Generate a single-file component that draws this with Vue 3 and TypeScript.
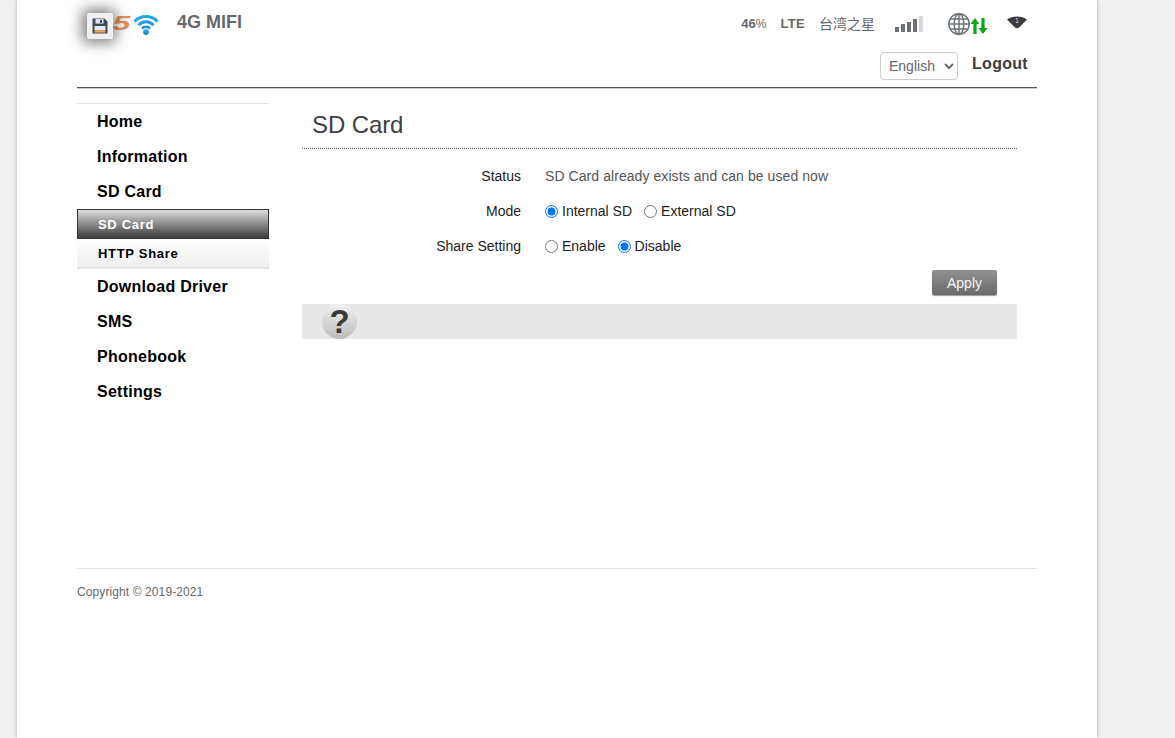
<template>
  <div class="page">
    <div class="container">
      <header class="header">
        <div class="top-row">
          <div class="logo">
            <span class="logo-g">5</span>
            <svg class="logo-wifi" width="26" height="24" viewBox="0 0 26 24">
              <defs>
                <linearGradient id="wifiBlue" x1="0" y1="0" x2="0" y2="1">
                  <stop offset="0" stop-color="#36b4f0" />
                  <stop offset="1" stop-color="#0c7fd0" />
                </linearGradient>
              </defs>
              <path d="M1.5 8.5 C7.5 1.8 18.5 1.8 24.5 8.5" fill="none" stroke="#22a5e8" stroke-width="3" />
              <path d="M5.5 12.2 C9.5 7.6 16.5 7.6 20.5 12.2" fill="none" stroke="#1c9ae2" stroke-width="2.8" />
              <path d="M9 15.6 C11.2 13.2 14.8 13.2 17 15.6" fill="none" stroke="#1a8fdc" stroke-width="2.4" />
              <circle cx="13" cy="19" r="2.9" fill="url(#wifiBlue)" />
            </svg>
            <div class="save-tip">
              <svg width="16" height="16" viewBox="0 0 16 16">
                <path d="M.5 .5 H12.5 L15.5 3.5 V15.5 H.5 Z" fill="#3f4a57" />
                <rect x="3.5" y="1" width="8" height="4.6" fill="#dfe5ec" />
                <rect x="8" y="1.8" width="2" height="3" fill="#3f4a57" />
                <rect x="2.5" y="8" width="11" height="4.4" fill="#e4edf6" />
                <rect x="2.5" y="12.4" width="11" height="2.2" fill="#f2a24e" />
              </svg>
            </div>
          </div>
          <span class="product">4G MIFI</span>
          <div class="status">
            <span class="battery">46<small>%</small></span>
            <span class="network">LTE</span>
            <span class="carrier">台湾之星</span>
            <span class="signal">
              <i v-for="(h, n) in bars" :key="n" :class="{ off: n === 4 }" :style="{ height: h + 'px' }"></i>
            </span>
            <span class="connect">
              <svg width="24" height="24" viewBox="0 0 24 24">
                <g fill="none" stroke="#6d7278" stroke-width="1.5">
                  <circle cx="12" cy="12" r="10.2" />
                  <ellipse cx="12" cy="12" rx="4.8" ry="10.2" />
                  <path d="M12 2 V22 M2 12 H22 M3.4 7 H20.6 M3.4 17 H20.6" />
                </g>
              </svg>
              <svg class="arrows" width="18" height="16" viewBox="0 0 18 16">
                <path d="M5 0 L9.5 6 H6.6 V16 H3.4 V6 H.5 Z" fill="#0aa51e" />
                <path d="M13 16 L8.5 10 H11.4 V0 H14.6 V10 H17.5 Z" fill="#0aa51e" />
              </svg>
            </span>
            <svg class="wifi-small" width="22" height="14" viewBox="0 0 22 14">
              <path d="M1 4.5 C6 .6 16 .6 21 4.5 L13 12.5 Q11 14 9 12.5 Z" fill="#3c3c3c" />
              <text x="11" y="8" text-anchor="middle" class="wifi-num">1</text>
            </svg>
          </div>
        </div>
        <div class="lang-row">
          <select class="lang">
            <option>English</option>
          </select>
          <a class="logout">Logout</a>
        </div>
      </header>

      <div class="content">
        <nav class="sidebar">
          <template v-for="item in menu" :key="item">
            <a class="nav-item">{{ item }}</a>
            <div v-if="item === 'SD Card'" class="sub-menu">
              <a class="sub-item active">SD Card</a>
              <a class="sub-item">HTTP Share</a>
            </div>
          </template>
        </nav>

        <main class="main">
          <h1 class="title">SD Card</h1>
          <form class="form" @submit.prevent>
            <div class="row">
              <label class="row-label">Status</label>
              <span class="value">SD Card already exists and can be used now</span>
            </div>
            <div class="row">
              <label class="row-label">Mode</label>
              <label class="radio"><input v-model="mode" type="radio" value="internal" />Internal SD</label>
              <label class="radio"><input v-model="mode" type="radio" value="external" />External SD</label>
            </div>
            <div class="row">
              <label class="row-label">Share Setting</label>
              <label class="radio"><input v-model="share" type="radio" value="enable" />Enable</label>
              <label class="radio"><input v-model="share" type="radio" value="disable" />Disable</label>
            </div>
            <div class="actions">
              <button class="apply">Apply</button>
            </div>
          </form>
          <div class="help-bar">
            <div class="help-icon">?</div>
          </div>
        </main>
      </div>

      <footer class="footer">Copyright © 2019-2021</footer>
    </div>
  </div>
</template>

<script setup lang="ts">
import { ref } from 'vue'

const menu = ['Home', 'Information', 'SD Card', 'Download Driver', 'SMS', 'Phonebook', 'Settings']
const bars = [5, 8, 10, 13, 16]
const mode = ref('internal')
const share = ref('disable')
</script>

<style>
html,
body {
  margin: 0;
  background: #f1f1f1;
}
</style>

<style scoped>
.page {
  font-family: "Liberation Sans", Arial, "Noto Sans CJK SC", sans-serif;
  height: 738px;
  overflow: hidden;
}

.container {
  box-sizing: border-box;
  width: 1080px;
  height: 738px;
  margin-left: 17px;
  padding: 0 60px;
  background: #fff;
  box-shadow: 0 0 4px #aaa;
}

.header {
  height: 87px;
  border-bottom: 1px solid #555;
  box-shadow: 0 1px 0 #ccc;
}

.top-row {
  display: flex;
  align-items: center;
  height: 47px;
}

.logo {
  position: relative;
  display: flex;
  align-items: center;
  width: 100px;
  height: 47px;
}

.logo-g {
  display: inline-block;
  width: 19px;
  margin-left: 35px;
  margin-right: 2px;
  font-size: 20px;
  font-weight: 700;
  font-style: italic;
  text-align: center;
  color: #e8915f;
  transform: scaleX(1.6);
}

.logo-wifi {
  margin-top: 2px;
}

.save-tip {
  position: absolute;
  left: 10px;
  top: 13px;
  display: flex;
  align-items: center;
  justify-content: center;
  width: 26px;
  height: 26px;
  background: #f0f0f0;
  border-radius: 2px;
  box-shadow: -1px 0 14px 4px rgba(0, 0, 0, 0.5);
}

.product {
  margin-bottom: 3px;
  font-size: 18px;
  font-weight: 700;
  color: #66686b;
}

.status {
  display: flex;
  align-items: center;
  margin-left: auto;
  padding-right: 9px;
  font-size: 14px;
  color: #66686b;
}

.battery {
  font-weight: 700;
  font-size: 13px;
}

.battery small {
  font-size: 12px;
  font-weight: 400;
}

.network {
  margin-left: 14px;
  font-size: 13px;
  font-weight: 700;
  letter-spacing: 0.3px;
}

.carrier {
  margin-left: 14px;
  margin-bottom: 2px;
  font-size: 14px;
}

.signal {
  display: flex;
  align-items: flex-end;
  gap: 2px;
  margin-left: 20px;
  height: 16px;
}

.signal i {
  width: 4px;
  background: #6d7278;
}

.signal i.off {
  background: #d8d8d8;
}

.connect {
  display: flex;
  align-items: center;
  margin-left: 24px;
}

.arrows {
  margin-top: 4px;
  margin-left: -1px;
}

.wifi-small {
  margin-left: 18px;
  margin-bottom: 3px;
}

.wifi-num {
  font-size: 7px;
  fill: #ddd;
}

.lang-row {
  display: flex;
  justify-content: flex-end;
  align-items: center;
  gap: 14px;
  padding-right: 9px;
  height: 38px;
}

.lang {
  box-sizing: border-box;
  width: 78px;
  height: 28px;
  padding: 0 4px;
  font-family: inherit;
  font-size: 14px;
  color: #66686b;
  background: #fff;
  border: 1px solid #ccc;
  border-radius: 4px;
}

.logout {
  margin-bottom: 4px;
  font-size: 16px;
  font-weight: 700;
  letter-spacing: 0.3px;
  color: #3c3c3c;
}

.content {
  display: flex;
  min-height: 465px;
  padding-top: 15px;
}

.sidebar {
  display: flex;
  flex-direction: column;
  align-self: flex-start;
  width: 192px;
  border-top: 1px solid #e4e4e4;
}

.nav-item {
  padding-left: 20px;
  font-size: 16px;
  font-weight: 700;
  line-height: 35px;
  letter-spacing: 0.25px;
  color: #000;
}

.sub-menu {
  display: flex;
  flex-direction: column;
}

.sub-item {
  box-sizing: border-box;
  height: 30px;
  padding-left: 21px;
  font-size: 13px;
  font-weight: 700;
  line-height: 29px;
  letter-spacing: 0.7px;
  color: #000;
  background: linear-gradient(#fff, #efefef);
  border-bottom: 2px solid #e2e2e2;
}

.sub-item.active {
  color: #fff;
  background: linear-gradient(#e0e0e0, #9a9a9a 40%, #3c3c3c);
  border: 1px solid #333;
  padding-left: 20px;
  line-height: 29px;
}

.main {
  width: 715px;
  margin-left: 33px;
}

.title {
  box-sizing: border-box;
  margin: 0;
  padding-left: 10px;
  height: 46px;
  font-size: 24px;
  font-weight: 400;
  line-height: 44px;
  letter-spacing: -0.1px;
  color: #3f3f3f;
  border-bottom: 1px dotted #555;
}

.form {
  padding-top: 9px;
}

.row {
  display: flex;
  align-items: center;
  height: 35px;
  font-size: 14px;
  color: #222;
}

.row-label {
  width: 219px;
  margin-right: 24px;
  text-align: right;
}

.value {
  letter-spacing: 0.07px;
  color: #555;
}

.radio {
  display: flex;
  align-items: center;
  margin-right: 12px;
}

.radio input {
  width: 13px;
  height: 13px;
  margin: 1px 4px 0 0;
}

.actions {
  display: flex;
  justify-content: flex-end;
  padding: 7px 20px 9px 0;
}

.apply {
  width: 65px;
  height: 25px;
  padding: 0;
  font-family: inherit;
  font-size: 14px;
  color: #f4f4f4;
  background: linear-gradient(#929292, #6a6a6a);
  border: 0;
  border-radius: 2px;
  box-shadow: 0 1px 1px #999;
}

.help-bar {
  height: 35px;
  padding-left: 20px;
  background: #e8e8e8;
}

.help-icon {
  width: 35px;
  height: 35px;
  font-size: 33px;
  font-weight: 700;
  line-height: 35px;
  text-align: center;
  color: #3a3a3a;
  border-radius: 50%;
  background: linear-gradient(#f2f2f2, #bcbcbc);
}

.footer {
  padding-top: 16px;
  font-size: 12px;
  letter-spacing: 0.1px;
  color: #66686b;
  border-top: 1px solid #e4e4e4;
}
</style>
